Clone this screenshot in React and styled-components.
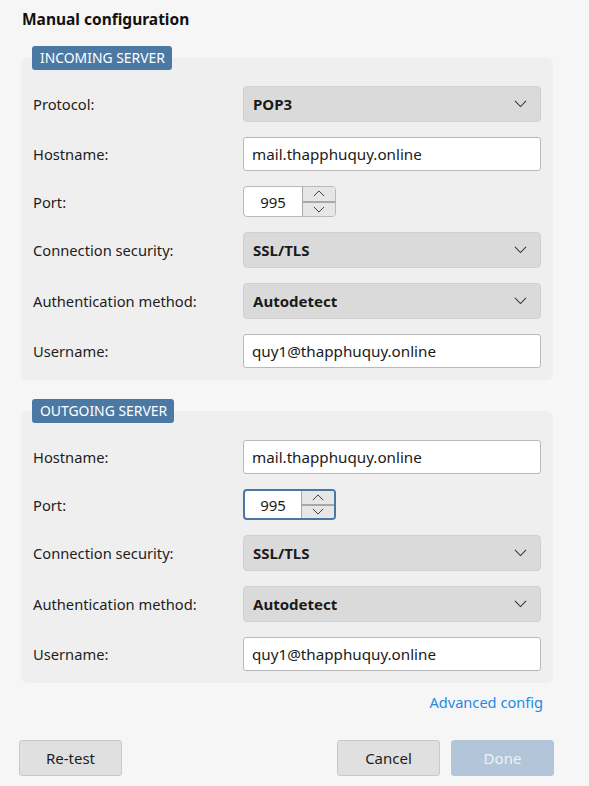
import styled, { createGlobalStyle } from 'styled-components'

const GlobalStyle = createGlobalStyle`
  html, body {
    margin: 0;
    padding: 0;
    background: #f6f6f6;
  }
  body {
    font-family: "Noto Sans", "Open Sans", sans-serif;
    color: #1b1b1b;
  }
`

const Page = styled.div`
  width: 589px;
  height: 786px;
  box-sizing: border-box;
  padding: 9px 36px 0 21px;
  display: flex;
  flex-direction: column;
`

const Title = styled.h1`
  margin: 0 0 16px 1px;
  font-size: 15.5px;
  line-height: 21px;
  font-weight: 700;
  color: #111;
`

const Section = styled.section`
  display: flex;
  flex-direction: column;
  align-items: flex-start;
  margin-bottom: ${(p) => p.$spaceAfter || 0}px;
`

const Badge = styled.div`
  position: relative;
  z-index: 1;
  margin-left: 11px;
  height: 24px;
  padding: 0 7px 0 8px;
  border-radius: 3px;
  background: #4b79a4;
  color: #fff;
  font-size: 13.9px;
  line-height: 24px;
`

const Panel = styled.div`
  align-self: stretch;
  margin-top: -12px;
  padding: ${(p) => p.$top}px 12px 12px 12px;
  background: #efefef;
  border-radius: 6px;
  display: flex;
  flex-direction: column;
  gap: 15px;
`

const Row = styled.div`
  display: grid;
  grid-template-columns: 210px 1fr;
  align-items: center;
`

const Label = styled.label`
  font-size: 14.7px;
  color: #1d1d1d;
`

const Select = styled.div`
  height: 36px;
  box-sizing: border-box;
  border: 1px solid #d0d0d0;
  border-radius: 4px;
  background: #dadada;
  display: flex;
  align-items: center;
  justify-content: space-between;
  padding: 0 13px 0 9px;
  font-size: 15px;
  font-weight: 700;
  color: #1a1a1a;
`

const TextInput = styled.div`
  height: 34px;
  box-sizing: border-box;
  border: 1px solid #b9b9b9;
  border-radius: 3px;
  background: #fff;
  display: flex;
  align-items: center;
  padding: 0 8px;
  font-size: 15.2px;
  color: #1a1a1a;
`

const Spin = styled.div`
  width: 93px;
  height: 31px;
  box-sizing: border-box;
  border: ${(p) => (p.$focused ? '2px solid #4a76a2' : '1px solid #b9b9b9')};
  border-radius: 4px;
  background: #fff;
  display: flex;
  overflow: hidden;
`

const SpinValue = styled.div`
  flex: 1;
  display: flex;
  align-items: center;
  justify-content: center;
  font-size: 15px;
  color: #1a1a1a;
`

const SpinButtons = styled.div`
  width: 32px;
  display: flex;
  flex-direction: column;
  border-left: 1px solid #a8a8a8;
  background: #e6e6e6;
`

const SpinButton = styled.div`
  flex: 1;
  display: flex;
  align-items: center;
  justify-content: center;
  & + & {
    border-top: 2px solid #a8a8a8;
  }
`

const LinkRow = styled.div`
  display: flex;
  justify-content: flex-end;
  padding: 9px 10px 0 0;
`

const Link = styled.a`
  font-size: 14.6px;
  color: #1e8ae6;
  text-decoration: none;
`

const Footer = styled.div`
  display: flex;
  align-items: center;
  gap: 11px;
  margin: 28px -1px 0 -2px;
`

const Button = styled.button`
  width: 103px;
  height: 36px;
  border: 1px solid ${(p) => (p.$disabled ? '#b3c5d8' : '#c9c9c9')};
  border-radius: 3px;
  background: ${(p) => (p.$disabled ? '#b3c5d8' : '#e0e0e0')};
  color: ${(p) => (p.$disabled ? '#eef2f7' : '#1d1d1d')};
  font-family: inherit;
  font-size: 15px;
  padding: 0;
  &:first-child {
    margin-right: auto;
  }
`

const Chevron = ({ up, size = 13 }) => (
  <svg width={size} height={size / 2 + 1} viewBox="0 0 14 8" fill="none">
    <polyline
      points={up ? '1,7 7,1 13,7' : '1,1 7,7 13,1'}
      stroke="#333"
      strokeWidth="1.1"
    />
  </svg>
)

const SelectField = ({ value }) => (
  <Select>
    {value}
    <Chevron />
  </Select>
)

const PortField = ({ value, focused }) => (
  <Spin $focused={focused}>
    <SpinValue>{value}</SpinValue>
    <SpinButtons>
      <SpinButton><Chevron up size={12} /></SpinButton>
      <SpinButton><Chevron size={12} /></SpinButton>
    </SpinButtons>
  </Spin>
)

const Field = ({ label, children }) => (
  <Row>
    <Label>{label}</Label>
    {children}
  </Row>
)

export default function App() {
  return (
    <Page>
      <GlobalStyle />
      <Title>Manual configuration</Title>

      <Section $spaceAfter={19}>
        <Badge>INCOMING SERVER</Badge>
        <Panel $top={28}>
          <Field label="Protocol:"><SelectField value="POP3" /></Field>
          <Field label="Hostname:"><TextInput>mail.thapphuquy.online</TextInput></Field>
          <Field label="Port:"><PortField value="995" /></Field>
          <Field label="Connection security:"><SelectField value="SSL/TLS" /></Field>
          <Field label="Authentication method:"><SelectField value="Autodetect" /></Field>
          <Field label="Username:"><TextInput>quy1@thapphuquy.online</TextInput></Field>
        </Panel>
      </Section>

      <Section>
        <Badge>OUTGOING SERVER</Badge>
        <Panel $top={29}>
          <Field label="Hostname:"><TextInput>mail.thapphuquy.online</TextInput></Field>
          <Field label="Port:"><PortField value="995" focused /></Field>
          <Field label="Connection security:"><SelectField value="SSL/TLS" /></Field>
          <Field label="Authentication method:"><SelectField value="Autodetect" /></Field>
          <Field label="Username:"><TextInput>quy1@thapphuquy.online</TextInput></Field>
        </Panel>
      </Section>

      <LinkRow>
        <Link href="#">Advanced config</Link>
      </LinkRow>

      <Footer>
        <Button>Re-test</Button>
        <Button>Cancel</Button>
        <Button $disabled>Done</Button>
      </Footer>
    </Page>
  )
}
